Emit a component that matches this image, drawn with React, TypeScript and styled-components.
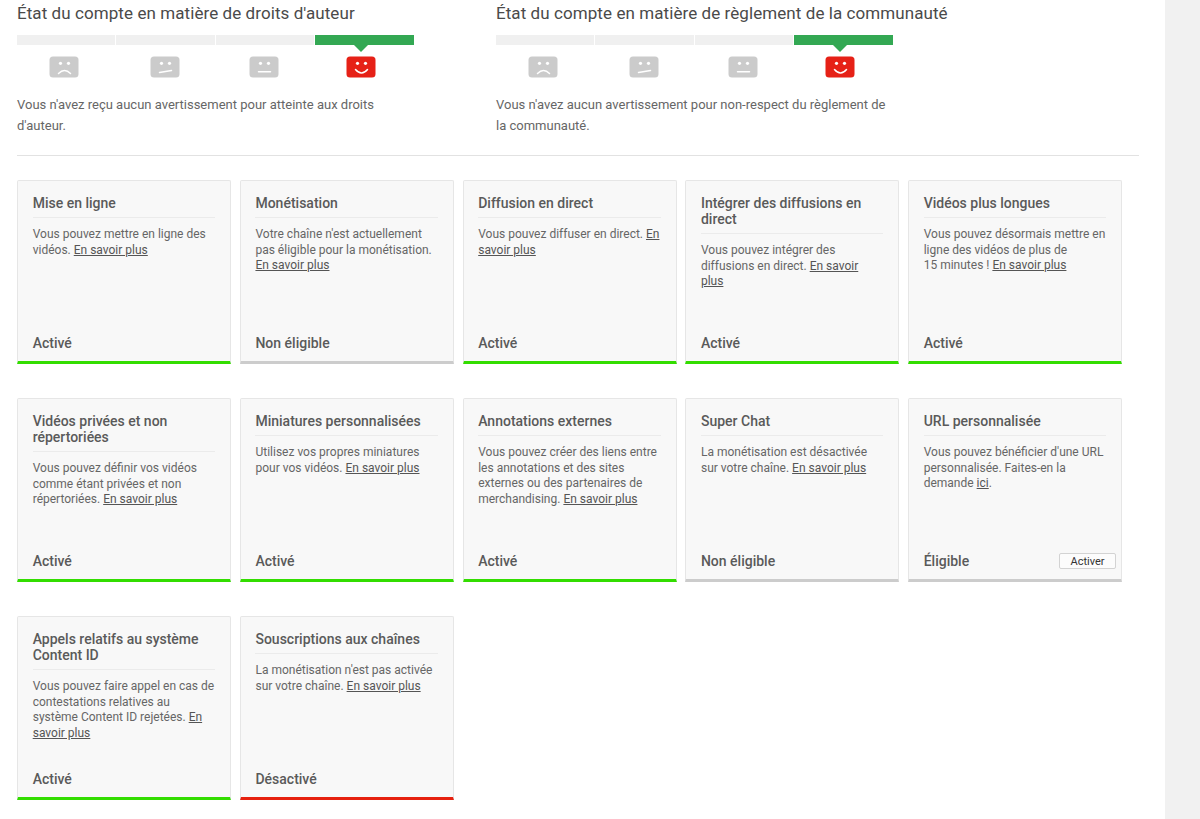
import React from "react";
import styled, { createGlobalStyle } from "styled-components";

const GlobalStyle = createGlobalStyle`
  html, body {
    margin: 0;
    padding: 0;
    background: #fff;
    font-family: Roboto, "Liberation Sans", sans-serif;
    color: #666;
  }
`;

const Page = styled.div`
  display: flex;
  width: 1200px;
  height: 819px;
  overflow: hidden;
`;

const Content = styled.main`
  width: 1165px;
  box-sizing: border-box;
  padding: 0 26px 0 17px;
`;

const Sidebar = styled.aside`
  flex: 1;
  background: #f1f1f1;
`;

const StatusRow = styled.section`
  display: grid;
  grid-template-columns: repeat(2, 479px);
  height: 155px;
  border-bottom: 1px solid #e2e2e2;
`;

const StatusBlock = styled.div`
  width: 396.5px;
`;

const StatusTitle = styled.h2`
  margin: 0;
  padding-top: 1px;
  font-size: 17px;
  line-height: 24px;
  font-weight: 400;
  letter-spacing: 0.075px;
  color: #4a4a4a;
  white-space: nowrap;
`;

const Meter = styled.div`
  display: grid;
  grid-template-columns: repeat(4, 1fr);
  gap: 1px;
  margin-top: 10px;
`;

const MeterCell = styled.div`
  display: flex;
  flex-direction: column;
  align-items: center;
`;

const MeterBar = styled.div<{ $active?: boolean }>`
  position: relative;
  align-self: stretch;
  height: 10px;
  background: ${(p) => (p.$active ? "#33a853" : "#f0f0f0")};
  ${(p) =>
    p.$active &&
    `&::after {
      content: "";
      position: absolute;
      left: 50%;
      top: 10px;
      margin-left: -10px;
      border-style: solid;
      border-width: 7px 7px 0;
      border-color: #33a853 transparent transparent;
    }`}
`;

const Face = styled.svg<{ $shift: number }>`
  display: block;
  width: 30px;
  height: 22px;
  margin-top: 11px;
  margin-right: ${(p) => p.$shift * 2}px;
`;

const StatusText = styled.p`
  margin: 16px 0 0;
  font-size: 13px;
  line-height: 21px;
  color: #666;
`;

const Grid = styled.div`
  display: grid;
  grid-template-columns: repeat(5, 214px);
  column-gap: 8.75px;
  row-gap: 34px;
  margin-top: 24px;
`;

const barColors = {
  on: "#33dd00",
  off: "#cccccc",
  bad: "#e6210f",
};

const Card = styled.article<{ $state: keyof typeof barColors }>`
  display: flex;
  flex-direction: column;
  box-sizing: border-box;
  height: 184px;
  padding: 14px 15px 8px 14.7px;
  background: #f8f8f8;
  border: 1px solid #e6e6e6;
  border-bottom: 3px solid ${(p) => barColors[p.$state]};
  border-radius: 2px 2px 0 0;
`;

const CardTitle = styled.h3`
  margin: 0;
  padding-bottom: 6px;
  border-bottom: 1px solid #ebebeb;
  font-size: 14px;
  line-height: 16px;
  font-weight: 500;
  color: #5a5a5a;
`;

const CardText = styled.p`
  margin: 9px 0 0;
  font-size: 12px;
  line-height: 15.5px;
  color: #666;
`;

const More = styled.a`
  color: #555;
  text-decoration: underline;
`;

const CardFooter = styled.div`
  display: flex;
  align-items: center;
  justify-content: space-between;
  margin-top: auto;
  margin-right: -10px;
`;

const CardState = styled.span`
  font-size: 14px;
  line-height: 20px;
  font-weight: 500;
  color: #5a5a5a;
`;

const ActivateButton = styled.button`
  width: 57px;
  height: 16px;
  padding: 0;
  background: #fcfcfc;
  border: 1px solid #d3d3d3;
  border-radius: 2px;
  font-family: inherit;
  font-size: 11px;
  line-height: 13px;
  font-weight: 400;
  color: #333;
`;

type Mood = "sad" | "meh" | "flat" | "happy";

const mouths: Record<Mood, string> = {
  sad: "M9.5 17.5 Q15.5 11.5 21.5 17.5",
  meh: "M9.5 16.5 L21.5 14.5",
  flat: "M9.5 15.7 L21.5 15.7",
  happy: "M9.5 13.5 Q15.5 20.5 21.5 13.5",
};

function FaceIcon({ mood, color, shift }: { mood: Mood; color: string; shift: number }) {
  return (
    <Face viewBox="0 0 30 22" $shift={shift}>
      <path
        d="M4 0.5 H26 Q29.5 0.5 29.5 4 V18 Q29.5 21.5 26 21.5 H4 Q0.5 21.5 0.5 18 V4 Q0.5 0.5 4 0.5 Z"
        fill={color}
      />
      <circle cx="11.5" cy="7.3" r="1.6" fill="#fff" />
      <circle cx="19.5" cy="7.3" r="1.6" fill="#fff" />
      <path d={mouths[mood]} fill="none" stroke="#fff" strokeWidth="1.5" strokeLinecap="round" />
    </Face>
  );
}

// the faces do not sit quite in the middle of their segments
const moods: { mood: Mood; shift: number }[] = [
  { mood: "sad", shift: 2 },
  { mood: "meh", shift: 1 },
  { mood: "flat", shift: 1 },
  { mood: "happy", shift: 3 },
];

function Status({ title, text }: { title: string; text: string }) {
  return (
    <StatusBlock>
      <StatusTitle>{title}</StatusTitle>
      <Meter>
        {moods.map(({ mood, shift }) => (
          <MeterCell key={mood}>
            <MeterBar $active={mood === "happy"} />
            <FaceIcon mood={mood} shift={shift} color={mood === "happy" ? "#e62117" : "#cbcbcb"} />
          </MeterCell>
        ))}
      </Meter>
      <StatusText>{text}</StatusText>
    </StatusBlock>
  );
}

const link = <More>En savoir plus</More>;

const features: {
  title: string;
  body: React.ReactNode;
  state: string;
  bar: keyof typeof barColors;
  action?: boolean;
}[] = [
  { title: "Mise en ligne", body: <>Vous pouvez mettre en ligne des vidéos. {link}</>, state: "Activé", bar: "on" },
  { title: "Monétisation", body: <>Votre chaîne n'est actuellement pas éligible pour la monétisation. {link}</>, state: "Non éligible", bar: "off" },
  { title: "Diffusion en direct", body: <>Vous pouvez diffuser en direct. {link}</>, state: "Activé", bar: "on" },
  { title: "Intégrer des diffusions en direct", body: <>Vous pouvez intégrer des diffusions en direct. {link}</>, state: "Activé", bar: "on" },
  { title: "Vidéos plus longues", body: <>Vous pouvez désormais mettre en ligne des vidéos de plus de 15&nbsp;minutes ! {link}</>, state: "Activé", bar: "on" },
  { title: "Vidéos privées et non répertoriées", body: <>Vous pouvez définir vos vidéos comme étant privées et non répertoriées. {link}</>, state: "Activé", bar: "on" },
  { title: "Miniatures personnalisées", body: <>Utilisez vos propres miniatures pour vos vidéos. {link}</>, state: "Activé", bar: "on" },
  { title: "Annotations externes", body: <>Vous pouvez créer des liens entre les annotations et des sites externes ou des partenaires de merchandising. {link}</>, state: "Activé", bar: "on" },
  { title: "Super Chat", body: <>La monétisation est désactivée sur votre chaîne. {link}</>, state: "Non éligible", bar: "off" },
  { title: "URL personnalisée", body: <>Vous pouvez bénéficier d'une URL personnalisée. Faites-en la demande <More>ici</More>.</>, state: "Éligible", bar: "off", action: true },
  { title: "Appels relatifs au système Content ID", body: <>Vous pouvez faire appel en cas de contestations relatives au système Content ID rejetées. {link}</>, state: "Activé", bar: "on" },
  { title: "Souscriptions aux chaînes", body: <>La monétisation n'est pas activée sur votre chaîne. {link}</>, state: "Désactivé", bar: "bad" },
];

export default function App() {
  return (
    <Page>
      <GlobalStyle />
      <Content>
        <StatusRow>
          <Status
            title="État du compte en matière de droits d'auteur"
            text="Vous n'avez reçu aucun avertissement pour atteinte aux droits d'auteur."
          />
          <Status
            title="État du compte en matière de règlement de la communauté"
            text="Vous n'avez aucun avertissement pour non-respect du règlement de la communauté."
          />
        </StatusRow>
        <Grid>
          {features.map((f) => (
            <Card key={f.title} $state={f.bar}>
              <CardTitle>{f.title}</CardTitle>
              <CardText>{f.body}</CardText>
              <CardFooter>
                <CardState>{f.state}</CardState>
                {f.action && <ActivateButton>Activer</ActivateButton>}
              </CardFooter>
            </Card>
          ))}
        </Grid>
      </Content>
      <Sidebar />
    </Page>
  );
}
